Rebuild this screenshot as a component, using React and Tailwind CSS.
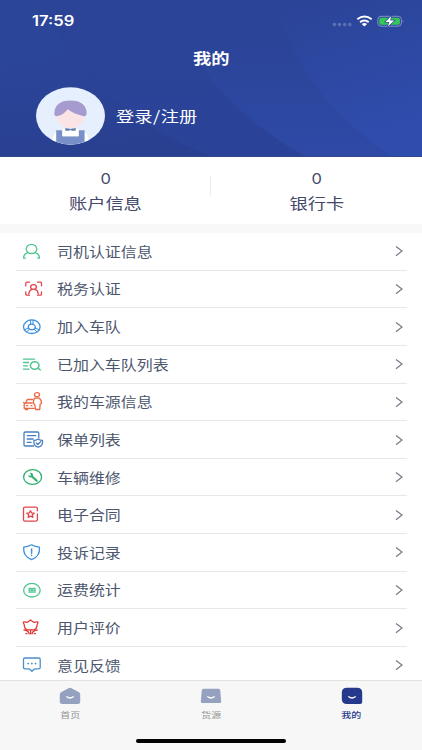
import React from 'react';

function Icon({ color, children }) {
  return (
    <svg width="24" height="22" viewBox="0 0 24 22" fill="none" stroke={color} strokeWidth="1.3" strokeLinecap="round" strokeLinejoin="round" className="mt-px block shrink-0">
      {children}
    </svg>
  );
}

const GREEN = '#4fc592';
const RED = '#e2474c';
const BLUE = '#3f8fdc';

const rows = [
  {
    label: '司机认证信息',
    icon: (
      <Icon color={GREEN}>
        <ellipse cx="11.500" cy="7.900" rx="5.300" ry="4.600" />
        <path d="M8 11.600C5.200 12.400 3.500 14.400 3.600 17.200h1.600M15 11.600c2.800.8 4.500 2.800 4.400 5.600h-1.600" />
      </Icon>
    ),
  },
  {
    label: '税务认证',
    icon: (
      <Icon color={RED}>
        <path d="M9.500 4.200H6.800Q5.800 4.200 5.800 5.200V7.800M17.500 4.200h3Q21.500 4.200 21.500 5.200V7.800M5.800 13.800v2.400q0 1 1 1h2.700M21.500 13.800v2.400q0 1-1 1h-3" />
        <ellipse cx="13.500" cy="9" rx="2.900" ry="2.400" />
        <path d="M8.800 15.800c.2-2.600 1.700-4 3.200-4.400M18.200 15.800c-.2-2.600-1.700-4-3.200-4.400" />
      </Icon>
    ),
  },
  {
    label: '加入车队',
    icon: (
      <Icon color={BLUE}>
        <ellipse cx="11.800" cy="10.700" rx="8.300" ry="6.800" />
        <ellipse cx="11.800" cy="10.900" rx="3.500" ry="2.800" />
        <path d="M10.600 4.200v4.200M13 4.200v4.200M4.600 13.700l4.100-1.800M19 13.700l-4.100-1.800M6.500 15.800l3-2.500M17.100 15.800l-3-2.500" strokeWidth="1" />
      </Icon>
    ),
  },
  {
    label: '已加入车队列表',
    icon: (
      <Icon color={GREEN}>
        <path d="M3.500 5.200h11M3.500 8.500h5M3.500 11.800h4M3.500 15.200h5.500" />
        <ellipse cx="14.700" cy="11.500" rx="4.300" ry="3.700" strokeWidth="1.500" />
        <path d="M18 14l2.200 2" strokeWidth="1.500" />
      </Icon>
    ),
  },
  {
    label: '我的车源信息',
    icon: (
      <Icon color="#e96845">
        <ellipse cx="17" cy="3.800" rx="2.500" ry="2.100" />
        <path d="M14.500 7.200h4.800q2.300 1.600 2.200 5.300l-1.400.8-.3 5.200h-4.300l-.6-4.700q-2-1-1.400-3.300.3-2.200 1-3.300z" />
        <path d="M12.500 8.500H7.300L5.700 12l-1.500 1v4.300h10M3.500 11.500l2 .7M5.700 12h6.500M5.500 17.500v1.200h2v-1.200M6.500 14.700h1.300M11 14.700h1" />
      </Icon>
    ),
  },
  {
    label: '保单列表',
    icon: (
      <Icon color="#477fc1">
        <path d="M13.500 17H5.300Q4 17 4 15.800V4.200Q4 3 5.300 3h12.200q1.300 0 1.300 1.200v4.600M7.200 6.700h8.500M7.200 10h6M7.200 13.300h4" />
        <path d="M18.200 10q2 1.400 4.300 1.400v2.300q0 3-4.300 4.500-4.300-1.500-4.300-4.500v-2.300q2.300 0 4.300-1.400z" />
        <path d="M16.200 14l1.600 1.400 2.800-2.600" />
      </Icon>
    ),
  },
  {
    label: '车辆维修',
    icon: (
      <Icon color="#2eb070">
        <ellipse cx="12.600" cy="10" rx="9" ry="7.400" />
        <path d="M12 9.500l4.700 4.200" strokeWidth="2.200" />
        <path d="M9.800 5.700q3.200-.2 3.300 2.600-.2 2-2.300 2.200-2.400 0-2.800-2.500l2 .9 1-.8z" fill="#2eb070" stroke="none" />
      </Icon>
    ),
  },
  {
    label: '电子合同',
    icon: (
      <Icon color={RED}>
        <path d="M17.400 6.800V4.500q0-1.400-1.500-1.400H5q-1.500 0-1.500 1.400v11.200q0 1.400 1.500 1.400h10.900q1.500 0 1.500-1.400V10" />
        <path d="M10.500 6.800l1.100 2.100 2.600.3-1.900 1.600.6 2.500-2.400-1.200-2.400 1.200.6-2.500-1.900-1.600 2.600-.3z" />
      </Icon>
    ),
  },
  {
    label: '投诉记录',
    icon: (
      <Icon color={BLUE}>
        <path d="M11.600 2.800Q8 5 3.700 5.100q-.8 9.400 7.900 12.600 8.700-3.200 7.900-12.600Q15.200 5 11.600 2.800z" />
        <path d="M11.600 7v4.200M11.600 13.300v.2" strokeWidth="1.500" />
      </Icon>
    ),
  },
  {
    label: '运费统计',
    icon: (
      <Icon color={GREEN}>
        <ellipse cx="11.900" cy="10.200" rx="8.300" ry="6.800" />
        <path d="M9 8.300h2.300M12.700 8.300h2.500M9 10.200h6.200M9 12.200h2.500M12.800 12.200h2.400M9.200 8.500v3.500M12 8.500v3.500M15 8.500v3.500" strokeWidth="1.200" />
      </Icon>
    ),
  },
  {
    label: '用户评价',
    icon: (
      <Icon color="#e23a36">
        <path d="M7 5.300Q8.600 4.800 10.600 2.900q2 1.900 3.600 2.400 1.600-.6 3.800-.2-.2 1.400-.9 2.400 0 4.700-3.800 5.400H8Q4.200 12.200 4.200 7.500 3.500 6.500 3.300 5.100q2.200-.4 3.700.2z" />
        <path d="M10.600 13v3.800M4 13q4.300.2 5.200 3.800M17.200 13q-4.300.2-5.200 3.800M5.800 16.600h1.200M14.200 16.600h1.200" />
      </Icon>
    ),
  },
  {
    label: '意见反馈',
    icon: (
      <Icon color="#4a8fcb">
        <path d="M5 3h13.700Q20.200 3 20.200 4.300v8.300q0 1.300-1.500 1.300h-4.300l-2.500 2.300-2.500-2.300H5q-1.500 0-1.500-1.300V4.300Q3.500 3 5 3z" />
        <path d="M8 8.600h.3M11.700 8.600h.3M15.400 8.600h.3" strokeWidth="1.600" />
      </Icon>
    ),
  },
];

function StatusIcons() {
  return (
    <svg width="74" height="14" viewBox="0 0 74 14" className="block">
      <g fill="#5c70b2">
        <circle cx="2.400" cy="10.600" r="1.800" />
        <circle cx="7.500" cy="10.600" r="1.800" />
        <circle cx="12.700" cy="10.600" r="1.800" />
        <circle cx="17.800" cy="10.600" r="1.800" />
      </g>
      <g fill="none" stroke="#fff" strokeWidth="2">
        <path d="M25.300 5.200q7.200-5.200 14.400 0" />
        <path d="M28.100 8.100q4.300-3.200 8.600 0" />
      </g>
      <path d="M29.700 9.900q2.700-1.900 5.400 0L32.400 12.400z" fill="#fff" />
      <rect x="45.800" y="2.300" width="23.600" height="9.900" rx="3.200" fill="none" stroke="#8291c6" strokeWidth="1" />
      <rect x="47.300" y="3.700" width="20.600" height="7.100" rx="1.900" fill="#37c759" />
      <path d="M70.700 5.700q1.500 1.500 0 3z" fill="#8b99ca" />
      <path d="M59.300 1.900L53.500 7.900h3.800L55.800 12.600l6.400-6.200h-4z" fill="#fff" stroke="#2c4699" strokeWidth="1.400" paintOrder="stroke" />
    </svg>
  );
}

function Header() {
  return (
    <header className="relative h-[157px] shrink-0 overflow-hidden border-b border-[#33458b] bg-[#2a4397] text-white">
      <svg width="422" height="157" viewBox="0 0 422 157" className="absolute inset-0">
        <defs>
          <linearGradient id="corner" x1="0" y1="0" x2="0.500" y2="1">
            <stop offset="0.300" stopColor="#2b4599" />
            <stop offset="1" stopColor="#293f8f" />
          </linearGradient>
          <linearGradient id="middle" x1="0" y1="0" x2="0" y2="1">
            <stop offset="0" stopColor="#2b4498" />
            <stop offset="1" stopColor="#2a4398" />
          </linearGradient>
          <linearGradient id="band" x1="0" y1="0" x2="0" y2="1">
            <stop offset="0.250" stopColor="#2b4498" />
            <stop offset="1" stopColor="#2e4aa6" />
          </linearGradient>
          <linearGradient id="glow" x1="0" y1="0" x2="0.300" y2="1">
            <stop offset="0.050" stopColor="#2b4498" />
            <stop offset="1" stopColor="#2f4dad" />
          </linearGradient>
        </defs>
        <rect width="422" height="157" fill="url(#corner)" />
        <path d="M40 0Q65 55 110 95 155 136 213 157H422V0z" fill="url(#middle)" />
        <path d="M170 0Q182 45 214 83 248 124 306 157H422V0z" fill="url(#band)" />
        <path d="M275 0Q291 59 330 104 361 137 394 157H422V0z" fill="url(#glow)" />
      </svg>
      <div className="relative flex h-full flex-col">
        <div className="flex h-[42px] items-center justify-between pl-[32px] pr-[16px]">
          <span className="mt-px origin-left scale-x-[1.2] font-['Inter',sans-serif] text-[13.800px] font-semibold leading-none">17:59</span>
          <StatusIcons />
        </div>
        <h1 className="flex h-[31px] items-center justify-center text-[15.200px] font-bold leading-none">
          <span className="scale-x-[1.2]">我的</span>
        </h1>
        <div className="mt-[14px] flex items-center pl-[36px]">
          <svg width="69" height="58" viewBox="0 0 69 58" className="block">
            <defs>
              <clipPath id="avatar"><ellipse cx="34.500" cy="28.800" rx="34.500" ry="28.600" /></clipPath>
            </defs>
            <g clipPath="url(#avatar)">
              <rect width="69" height="58" fill="#e6effd" />
              <path d="M15 58l2.500-9q2-5.500 8-5.500h18q6 0 8 5.500L54 58z" fill="#fff" />
              <ellipse cx="34.500" cy="29" rx="14.200" ry="12.500" fill="#fae4e6" />
              <path d="M18.300 27Q18.500 13.500 34.500 13.500T50.700 27q-.5 2.500-3 2.200Q37 26.500 31.700 22.200 27 28.500 20.500 29.200q-2 0-2.200-2.200z" fill="#a69bcf" />
              <path d="M20.200 43.300h6.200v5.900h16.200v-5.900h6V58H20.200z" fill="#7890c7" />
              <path d="M26.400 42h16.200v7.200H26.400z" fill="#fff" />
              <path d="M29.200 41.200q2.800-.2 5.300.8 2.500-1 5.300-.8v2.400q-2.800.6-5.300-.7-2.500 1.300-5.300.7z" fill="#667fae" />
            </g>
          </svg>
          <span className="ml-[11px] flex origin-left scale-x-[1.200] text-[15.200px] leading-none">
            <span>登录</span>
            <span className="px-[0.500px]">/</span>
            <span>注册</span>
          </span>
        </div>
      </div>
    </header>
  );
}

function Stat({ label }) {
  return (
    <div className="flex flex-1 flex-col items-center text-[#44496a]">
      <span className="mt-[14px] scale-x-[1.1] pl-px font-['Inter',sans-serif] text-[15px] leading-4">0</span>
      <span className="mt-[5px] scale-x-[1.2] text-[15.200px] leading-5">{label}</span>
    </div>
  );
}

function Tab({ label, active, children }) {
  return (
    <div className={active ? 'flex flex-1 flex-col items-center text-[#293a8b]' : 'flex flex-1 flex-col items-center text-[#929294]'}>
      <svg width="22" height="18" viewBox="0 0 22 18" className="mt-[6px] block">
        {children}
        <path d="M7.800 9.700q3.200 2.600 6.400 0" fill="none" stroke="#fff" strokeWidth="1.300" strokeLinecap="round" />
      </svg>
      <span className={active ? 'mt-[3px] scale-x-[1.2] text-[8.300px] font-medium leading-3' : 'mt-[3px] scale-x-[1.2] text-[8.300px] leading-3'}>{label}</span>
    </div>
  );
}

export default function App() {
  return (
    <div lang="zh-CN" className="flex h-[750px] w-[422px] flex-col overflow-hidden bg-white font-['Noto_Sans_CJK_SC',sans-serif]">
      <Header />
      <section className="flex h-[67px] shrink-0 bg-white">
        <Stat label="账户信息" />
        <div className="-ml-px mt-[19px] h-5 w-px bg-[#ebecef]" />
        <Stat label="银行卡" />
      </section>
      <div className="h-[9px] shrink-0 bg-[#f8f8f8]" />
      <main className="min-h-0 flex-1 overflow-hidden">
        {rows.map((row) => (
          <div key={row.label} className="ml-4 mr-[15px] flex h-[37.650px] items-center border-b border-[#e6e8ee] pl-1 pr-[4px]">
            {row.icon}
            <span className="ml-[12.500px] origin-left scale-x-[1.2] text-[13.300px] leading-none text-[#4c566d]">{row.label}</span>
            <svg width="8" height="12" viewBox="0 0 8 12" className="ml-auto block" fill="none" stroke="#737b88" strokeWidth="1.200">
              <path d="M1 1.500L7 6.100 1 10.700" />
            </svg>
          </div>
        ))}
      </main>
      <nav className="flex h-[70px] shrink-0 flex-col justify-between border-t border-[#e2e2e3] bg-[#f7f7f7]">
        <div className="flex">
          <Tab label="首页">
            <path d="M9.500 1.200q1.500-1 3 0l7.500 4q1.200.8 1.200 2v7.300q0 2.500-2.500 2.500H3.300Q.8 17 .8 14.500V7.200q0-1.200 1.200-2z" fill="#95a1be" />
          </Tab>
          <Tab label="货源">
            <path d="M3.500 1.700h15q1.500 0 1.700 1.500l1 11.300q0 1.500-1.700 1.500h-17Q.8 16 .8 14.500l1-11.300q.2-1.500 1.700-1.500z" fill="#95a1be" />
          </Tab>
          <Tab label="我的" active>
            <path d="M6 .7h10q5.200 0 5.200 5V15q0 2-2 2H6Q.8 17 .8 12V5.700q0-5 5.200-5z" fill="#263a8d" />
          </Tab>
        </div>
        <div className="mb-[7px] h-[4px] w-[150px] self-center rounded-full bg-black" />
      </nav>
    </div>
  );
}
